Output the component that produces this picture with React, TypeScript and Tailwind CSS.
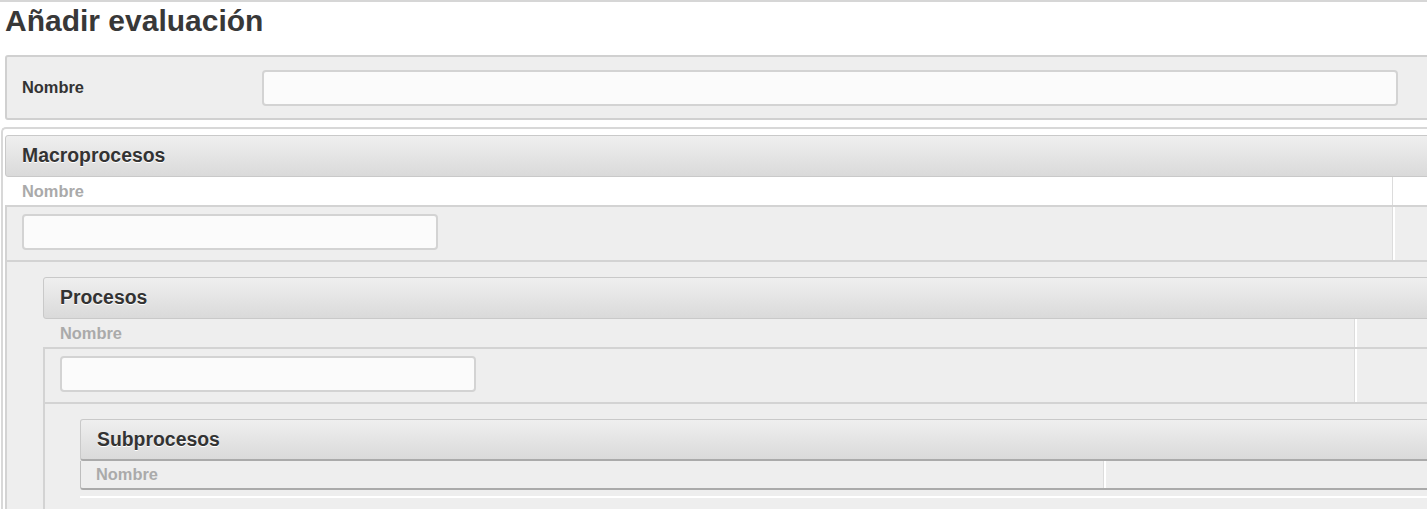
const font = "font-['Liberation_Sans',Arial,sans-serif]";

function Field({ className = "" }: { className?: string }) {
  return (
    <div
      className={`h-[36px] rounded-[4px] border-2 border-[#d3d3d3] bg-[#fbfbfb] ${className}`}
    />
  );
}

function SectionHeader({ title, dark }: { title: string; dark?: boolean }) {
  return (
    <div
      className={`flex h-[42px] items-center rounded-[3px] border border-[#c9c9c9] bg-linear-to-b from-[#efefef] to-[#dadada] pl-[16px] text-[19.4px] font-bold text-[#333] [text-shadow:0_1px_0_#fff] ${
        dark ? "border-b-2 border-b-[#aaaaaa]" : ""
      }`}
    >
      {title}
    </div>
  );
}

function Level({
  title,
  col,
  top,
  indent = 36,
  children,
}: {
  title: string;
  col: number;
  top?: boolean;
  indent?: number;
  children?: React.ReactNode;
}) {
  return (
    <div className="flex flex-col">
      <SectionHeader title={title} />
      {/* column header */}
      <div className={`flex h-[28px] ${top ? "bg-white" : ""}`}>
        <div
          className="flex items-center border-r border-[#dcdcdc] pl-[17px] text-[16.4px] font-bold text-[#aaaaaa]"
          style={{ width: col }}
        >
          Nombre
        </div>
        <div className="flex-1 border-l-2 border-white" />
      </div>
      {/* input row */}
      <div className="flex border-t-2 border-[#d3d3d3] bg-[#eeeeee]">
        <div
          className="border-l-2 border-r border-[#d3d3d3] border-r-[#dcdcdc] pt-[7px] pb-[10px] pl-[15px]"
          style={{ width: col }}
        >
          <Field className="w-[416px]" />
        </div>
        <div className="flex-1 border-l-2 border-white" />
      </div>
      {/* nested row */}
      <div
        className="border-t-2 border-l-2 border-[#d3d3d3] bg-[#eeeeee] pt-[15px]"
        style={{ paddingLeft: indent }}
      >
        {children}
      </div>
    </div>
  );
}

export default function App() {
  return (
    <div
      className={`h-[509px] w-[1427px] overflow-hidden border-t-2 border-[#d6d6d6] bg-white ${font}`}
    >
      <h1 className="mt-[2px] pl-[5px] text-[30px] leading-[34px] font-bold text-[#383838]">
        Añadir evaluación
      </h1>

      {/* nombre de la evaluación */}
      <div className="mt-[17px] ml-[5px] flex h-[65px] w-[1460px] items-center rounded-[3px] border-2 border-[#d0d0d0] bg-[#eeeeee] pl-[15px]">
        <div className="w-[240px] text-[16.4px] font-bold text-[#333]">Nombre</div>
        <Field className="w-[1136px]" />
      </div>

      {/* macroprocesos */}
      <div className="mt-[7px] ml-[1px] w-[1480px] rounded-tl-[5px] border-t-2 border-l-2 border-[#d8d8d8] pt-[6px] pl-[2px]">
        <div className="w-[1460px]">
          <Level title="Macroprocesos" col={1388} top>
            <Level title="Procesos" col={1312} indent={35}>
              <div className="flex flex-col">
                <SectionHeader title="Subprocesos" dark />
                <div className="flex h-[29px] rounded-bl-[3px] border-b-2 border-l border-[#aaaaaa] border-l-[#bdbdbd]">
                  <div className="flex w-[1023px] items-center border-r border-[#dcdcdc] pl-[15px] text-[16.4px] font-bold text-[#aaaaaa]">
                    Nombre
                  </div>
                  <div className="flex-1 border-l-2 border-white" />
                </div>
                <div className="mt-[6px] h-[2px] bg-white" />
                <div className="h-[60px]" />
              </div>
            </Level>
          </Level>
        </div>
      </div>
    </div>
  );
}
